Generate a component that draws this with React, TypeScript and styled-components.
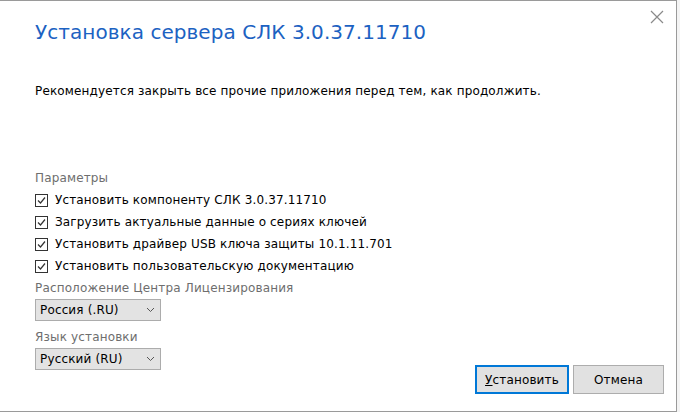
import React from 'react'
import styled, { createGlobalStyle } from 'styled-components'

const GlobalStyle = createGlobalStyle`
    html, body {
        margin: 0;
        padding: 0;
        background: #ffffff;
    }
    body {
        font-family: 'DejaVu Sans', Verdana, sans-serif;
        font-size: 12px;
        letter-spacing: 0.15px;
        color: #000;
    }
`

const Page = styled.div`
    width: 680px;
    height: 412px;
    display: flex;
    background: #f4f4f4;
`

const Dialog = styled.div`
    position: relative;
    box-sizing: border-box;
    width: 677px;
    height: 412px;
    background: #fff;
    border-top: 1px solid #9a9a9a;
    border-right: 1px solid #9a9a9a;
    border-bottom: 1px solid #9a9a9a;
    display: flex;
    flex-direction: column;
`

const CloseButton = styled.button`
    position: absolute;
    top: 8px;
    right: 11px;
    width: 16px;
    height: 16px;
    padding: 0;
    border: none;
    background: transparent;
    display: flex;
    align-items: center;
    justify-content: center;
`

const Title = styled.h1`
    margin: 17px 0 0 35px;
    font-size: 20px;
    font-weight: normal;
    line-height: 28px;
    color: #1c62c2;
    letter-spacing: 0.05px;
`

const Message = styled.p`
    margin: 37px 0 0 35px;
    line-height: 16px;
`

const Spacer = styled.div`
    flex: 1;
`

const Bottom = styled.div`
    display: flex;
    align-items: flex-end;
    padding: 0 12px 17px 35px;
`

const Options = styled.div`
    flex: 1;
    display: flex;
    flex-direction: column;
    margin-bottom: 24px;
`

const GroupLabel = styled.div<{ top?: number }>`
    color: #6e6e6e;
    line-height: 16px;
    margin-top: ${({ top }) => top ?? 0}px;
    margin-bottom: 3px;
`

const CheckRow = styled.label`
    display: flex;
    align-items: center;
    gap: 7px;
    height: 22px;
`

const Box = styled.span`
    box-sizing: border-box;
    width: 13px;
    height: 13px;
    border: 1px solid #333;
    background: #fff;
    display: flex;
    align-items: center;
    justify-content: center;
`

const Select = styled.div`
    box-sizing: border-box;
    width: 126px;
    height: 22px;
    background: #e3e3e3;
    border: 1px solid #acacac;
    display: flex;
    align-items: center;
    justify-content: space-between;
    padding: 0 5px 0 4px;
`

const Actions = styled.div`
    display: flex;
    gap: 4px;
`

const Button = styled.button<{ primary?: boolean }>`
    box-sizing: border-box;
    width: ${({ primary }) => (primary ? 94 : 91)}px;
    height: 29px;
    font-family: inherit;
    font-size: 12px;
    letter-spacing: inherit;
    color: #000;
    background: #e1e1e1;
    border: ${({ primary }) => (primary ? '2px solid #0078d7' : '1px solid #adadad')};
    padding: 0;
`

const Hotkey = styled.span`
    text-decoration: underline;
`

const Check = () => (
    <svg width="11" height="11" viewBox="0 0 11 11">
        <path d="M2 5.5 L4.5 8 L9 2.5" fill="none" stroke="#333" strokeWidth="1.2" />
    </svg>
)

const Chevron = () => (
    <svg width="9" height="6" viewBox="0 0 9 6">
        <path d="M1 1 L4.5 4.5 L8 1" fill="none" stroke="#555" strokeWidth="1" />
    </svg>
)

const options = [
    'Установить компоненту СЛК 3.0.37.11710',
    'Загрузить актуальные данные о сериях ключей',
    'Установить драйвер USB ключа защиты 10.1.11.701',
    'Установить пользовательскую документацию',
]

export default function App() {
    return (
        <Page>
            <GlobalStyle />
            <Dialog>
                <CloseButton aria-label="Закрыть">
                    <svg width="14" height="14" viewBox="0 0 14 14">
                        <path d="M1 1 L13 13 M13 1 L1 13" stroke="#8a8a8a" strokeWidth="1.2" />
                    </svg>
                </CloseButton>
                <Title>Установка сервера СЛК 3.0.37.11710</Title>
                <Message>Рекомендуется закрыть все прочие приложения перед тем, как продолжить.</Message>
                <Spacer />
                <Bottom>
                    <Options>
                        <GroupLabel>Параметры</GroupLabel>
                        {options.map((o) => (
                            <CheckRow key={o}>
                                <Box>
                                    <Check />
                                </Box>
                                {o}
                            </CheckRow>
                        ))}
                        <GroupLabel top={3}>Расположение Центра Лицензирования</GroupLabel>
                        <Select>
                            Россия (.RU)
                            <Chevron />
                        </Select>
                        <GroupLabel top={8}>Язык установки</GroupLabel>
                        <Select>
                            Русский (RU)
                            <Chevron />
                        </Select>
                    </Options>
                    <Actions>
                        <Button primary>
                            <Hotkey>У</Hotkey>становить
                        </Button>
                        <Button>Отмена</Button>
                    </Actions>
                </Bottom>
            </Dialog>
        </Page>
    )
}
